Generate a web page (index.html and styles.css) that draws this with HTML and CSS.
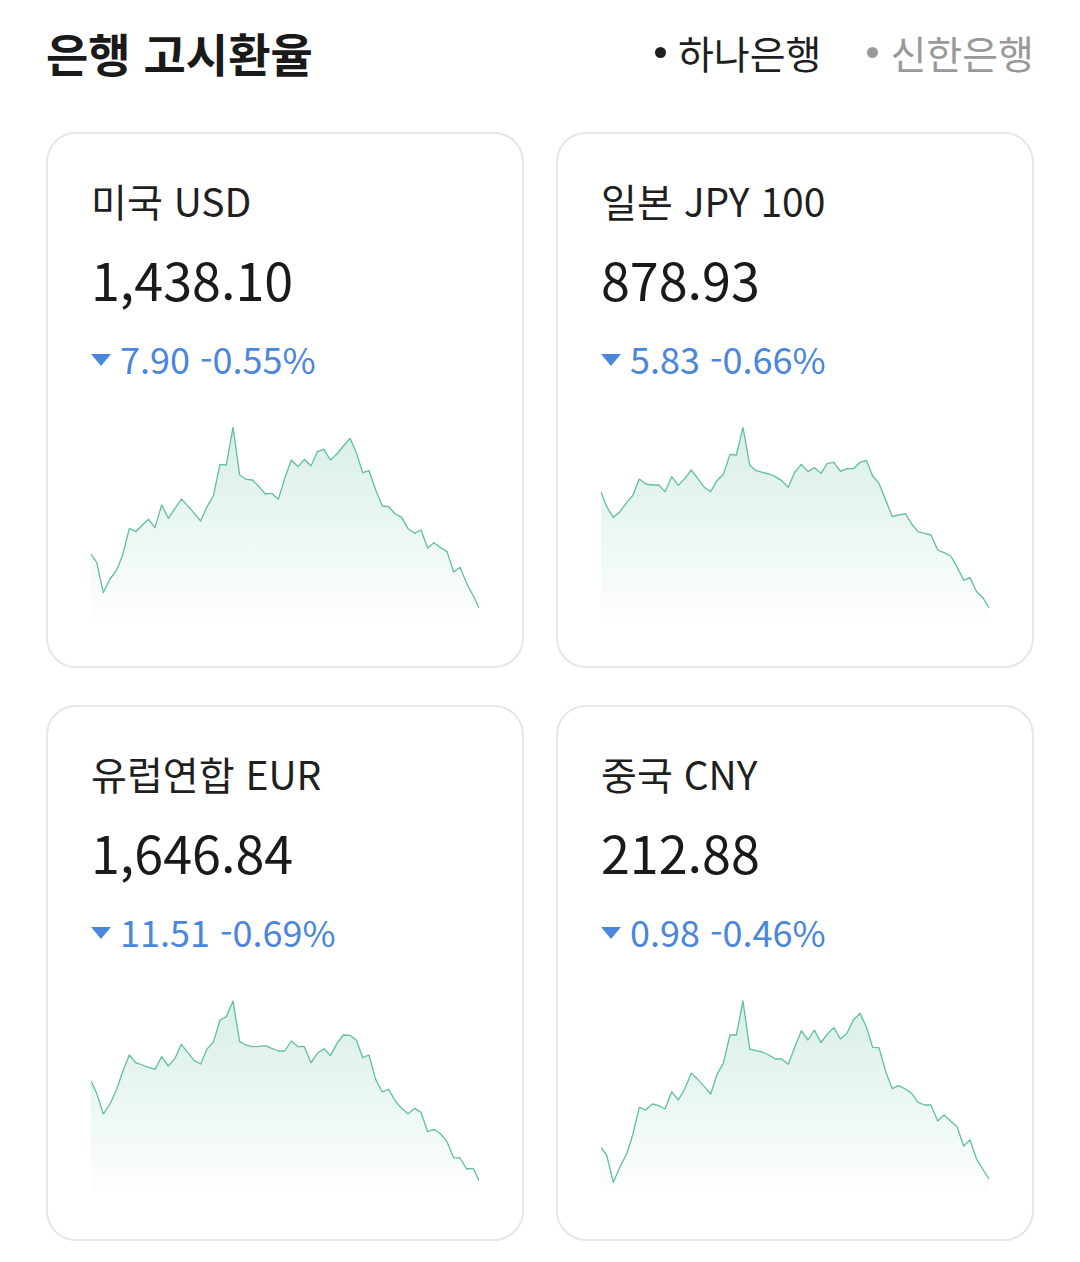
FILE: index.html
```html
<!DOCTYPE html>
<html lang="ko">
<head>
  <meta charset="UTF-8">
  <meta name="viewport" content="width=device-width, initial-scale=1.0">
  <title>은행 고시환율</title>
  <link rel="stylesheet" href="styles.css">
</head>
<body>
  <div class="page">
    <div class="header">
      <h1 class="title">은행 고시환율</h1>
      <div class="tabs">
        <span class="tab active">하나은행</span>
        <span class="tab">신한은행</span>
      </div>
    </div>

    <div class="grid">
      <div class="card">
        <div class="name">미국 USD</div>
        <div class="price">1,438.10</div>
        <div class="change"><span class="arrow"></span>7.90 -0.55%</div>
        <svg class="chart" viewBox="33 0 1164 660" preserveAspectRatio="none">
          <defs>
            <linearGradient id="fill1" x1="0" y1="0" x2="0" y2="1">
              <stop offset="0" stop-color="#5cbd92" stop-opacity="0.24"/>
              <stop offset="1" stop-color="#5cbd92" stop-opacity="0"/>
            </linearGradient>
          </defs>
          <polygon fill="url(#fill1)" points="33,432 50,457 70,548 90,507 110,480 128,435 148,355 167,365 187,345 206,328 225,353 245,285 265,325 285,295 304,267 323,287 343,310 362,333 381,290 400,258 420,163 439,165 459,52 479,195 498,208 517,210 537,230 556,252 575,250 595,268 614,205 634,150 654,170 673,148 693,168 712,125 732,118 751,150 771,132 790,108 810,85 829,128 848,188 867,182 887,240 907,288 926,290 946,312 965,322 984,356 1004,370 1023,360 1043,414 1062,398 1082,413 1101,425 1121,486 1140,472 1160,520 1180,558 1197,593 1197,660 33,660"/>
          <polyline class="line" points="33,432 50,457 70,548 90,507 110,480 128,435 148,355 167,365 187,345 206,328 225,353 245,285 265,325 285,295 304,267 323,287 343,310 362,333 381,290 400,258 420,163 439,165 459,52 479,195 498,208 517,210 537,230 556,252 575,250 595,268 614,205 634,150 654,170 673,148 693,168 712,125 732,118 751,150 771,132 790,108 810,85 829,128 848,188 867,182 887,240 907,288 926,290 946,312 965,322 984,356 1004,370 1023,360 1043,414 1062,398 1082,413 1101,425 1121,486 1140,472 1160,520 1180,558 1197,593"/>
        </svg>
      </div>

      <div class="card">
        <div class="name">일본 JPY 100</div>
        <div class="price">878.93</div>
        <div class="change"><span class="arrow"></span>5.83 -0.66%</div>
        <svg class="chart" viewBox="33 0 1164 660" preserveAspectRatio="none">
          <defs>
            <linearGradient id="fill2" x1="0" y1="0" x2="0" y2="1">
              <stop offset="0" stop-color="#5cbd92" stop-opacity="0.24"/>
              <stop offset="1" stop-color="#5cbd92" stop-opacity="0"/>
            </linearGradient>
          </defs>
          <polygon fill="url(#fill2)" points="33,245 50,290 70,322 90,305 110,278 128,257 148,207 167,222 187,225 206,225 225,245 245,200 265,226 285,205 304,180 323,205 343,232 362,245 381,212 400,193 420,133 439,135 459,52 479,165 498,182 517,187 537,192 556,200 575,212 595,232 614,187 634,163 654,185 673,173 693,190 712,160 732,157 751,184 771,176 790,176 810,157 829,151 848,198 867,220 887,270 907,320 926,315 946,311 965,342 984,365 1004,370 1023,375 1043,420 1062,428 1082,438 1101,470 1121,511 1140,503 1160,545 1180,565 1197,593 1197,660 33,660"/>
          <polyline class="line" points="33,245 50,290 70,322 90,305 110,278 128,257 148,207 167,222 187,225 206,225 225,245 245,200 265,226 285,205 304,180 323,205 343,232 362,245 381,212 400,193 420,133 439,135 459,52 479,165 498,182 517,187 537,192 556,200 575,212 595,232 614,187 634,163 654,185 673,173 693,190 712,160 732,157 751,184 771,176 790,176 810,157 829,151 848,198 867,220 887,270 907,320 926,315 946,311 965,342 984,365 1004,370 1023,375 1043,420 1062,428 1082,438 1101,470 1121,511 1140,503 1160,545 1180,565 1197,593"/>
        </svg>
      </div>

      <div class="card">
        <div class="name">유럽연합 EUR</div>
        <div class="price">1,646.84</div>
        <div class="change"><span class="arrow"></span>11.51 -0.69%</div>
        <svg class="chart" viewBox="33 -21 1164 660" preserveAspectRatio="none">
          <defs>
            <linearGradient id="fill3" x1="0" y1="0" x2="0" y2="1">
              <stop offset="0" stop-color="#5cbd92" stop-opacity="0.24"/>
              <stop offset="1" stop-color="#5cbd92" stop-opacity="0"/>
            </linearGradient>
          </defs>
          <polygon fill="url(#fill3)" points="33,273 50,310 70,372 90,342 110,298 128,245 148,195 167,218 187,225 206,232 225,238 245,200 265,228 285,205 304,163 323,187 343,212 362,222 381,177 400,157 420,90 439,80 459,33 479,155 498,165 517,170 537,169 556,167 575,175 595,183 614,183 634,153 654,170 673,170 693,218 712,190 732,176 751,197 771,160 790,135 810,136 829,150 848,203 867,195 887,268 907,306 926,298 946,333 965,355 984,372 1004,355 1023,367 1043,425 1062,418 1082,432 1101,455 1121,503 1140,504 1160,537 1180,535 1197,572 1197,639 33,639"/>
          <polyline class="line" points="33,273 50,310 70,372 90,342 110,298 128,245 148,195 167,218 187,225 206,232 225,238 245,200 265,228 285,205 304,163 323,187 343,212 362,222 381,177 400,157 420,90 439,80 459,33 479,155 498,165 517,170 537,169 556,167 575,175 595,183 614,183 634,153 654,170 673,170 693,218 712,190 732,176 751,197 771,160 790,135 810,136 829,150 848,203 867,195 887,268 907,306 926,298 946,333 965,355 984,372 1004,355 1023,367 1043,425 1062,418 1082,432 1101,455 1121,503 1140,504 1160,537 1180,535 1197,572"/>
        </svg>
      </div>

      <div class="card">
        <div class="name">중국 CNY</div>
        <div class="price">212.88</div>
        <div class="change"><span class="arrow"></span>0.98 -0.46%</div>
        <svg class="chart" viewBox="33 -21 1164 660" preserveAspectRatio="none">
          <defs>
            <linearGradient id="fill4" x1="0" y1="0" x2="0" y2="1">
              <stop offset="0" stop-color="#5cbd92" stop-opacity="0.24"/>
              <stop offset="1" stop-color="#5cbd92" stop-opacity="0"/>
            </linearGradient>
          </defs>
          <polygon fill="url(#fill4)" points="33,472 50,495 70,577 90,530 110,492 128,435 148,352 167,360 187,342 206,347 225,357 245,305 265,330 285,295 304,250 323,268 343,290 362,312 381,253 400,220 420,135 439,135 459,33 479,177 498,182 517,186 537,195 556,207 575,207 595,223 614,172 634,122 654,150 673,120 693,158 712,132 732,113 751,147 771,130 790,90 810,70 829,110 848,172 867,173 887,245 907,296 926,287 946,297 965,310 984,337 1004,345 1023,345 1043,393 1062,375 1082,393 1101,410 1121,468 1140,450 1160,508 1180,540 1197,567 1197,639 33,639"/>
          <polyline class="line" points="33,472 50,495 70,577 90,530 110,492 128,435 148,352 167,360 187,342 206,347 225,357 245,305 265,330 285,295 304,250 323,268 343,290 362,312 381,253 400,220 420,135 439,135 459,33 479,177 498,182 517,186 537,195 556,207 575,207 595,223 614,172 634,122 654,150 673,120 693,158 712,132 732,113 751,147 771,130 790,90 810,70 829,110 848,172 867,173 887,245 907,296 926,287 946,297 965,310 984,337 1004,345 1023,345 1043,393 1062,375 1082,393 1101,410 1121,468 1140,450 1160,508 1180,540 1197,567"/>
        </svg>
      </div>
    </div>
  </div>
</body>
</html>
```

FILE: styles.css
```css
body {
  margin: 0;
  background-color: #fff;
  font-family: "Noto Sans CJK KR", "Noto Sans", sans-serif;
  color: #1a1a1a;
}
.page {
  padding: 0 46px;
}
.header {
  height: 104px;
  display: flex;
  justify-content: space-between;
  align-items: center;
}
.title {
  margin: 0;
  font-size: 46px;
  font-weight: 700;
  color: #1a1a1a;
}
.tabs {
  display: flex;
  gap: 46px;
}
.tab {
  display: flex;
  align-items: center;
  font-size: 39px;
  color: #999;
}
.tab::before {
  content: "";
  width: 11px;
  height: 11px;
  border-radius: 50%;
  background-color: #999;
  margin-right: 12px;
}
.tab.active {
  color: #1f1f1f;
}
.tab.active::before {
  background-color: #1f1f1f;
}
.grid {
  margin-top: 28px;
  display: grid;
  grid-template-columns: 1fr 1fr;
  column-gap: 32px;
  row-gap: 37px;
}
.card {
  border: 2px solid #e6e6e6;
  border-radius: 30px;
  padding: 44px 43px 36px 43px;
}
.name {
  font-size: 39px;
  line-height: 44px;
  color: #1f1f1f;
}
.price {
  margin-top: 26px;
  font-size: 52px;
  line-height: 62px;
  color: #1a1a1a;
}
.change {
  margin-top: 26px;
  display: flex;
  align-items: center;
  font-size: 36px;
  line-height: 44px;
  color: #4a86dc;
}
.arrow {
  width: 0;
  height: 0;
  border-left: 10px solid transparent;
  border-right: 10px solid transparent;
  border-top: 12px solid #4a86dc;
  margin-right: 9px;
  margin-top: 4px;
}
.chart {
  display: block;
  margin-top: 30px;
  width: 100%;
  height: 220px;
}
.line {
  fill: none;
  stroke: #5fc09a;
  stroke-width: 1.3;
  vector-effect: non-scaling-stroke;
  stroke-linejoin: round;
}
```
